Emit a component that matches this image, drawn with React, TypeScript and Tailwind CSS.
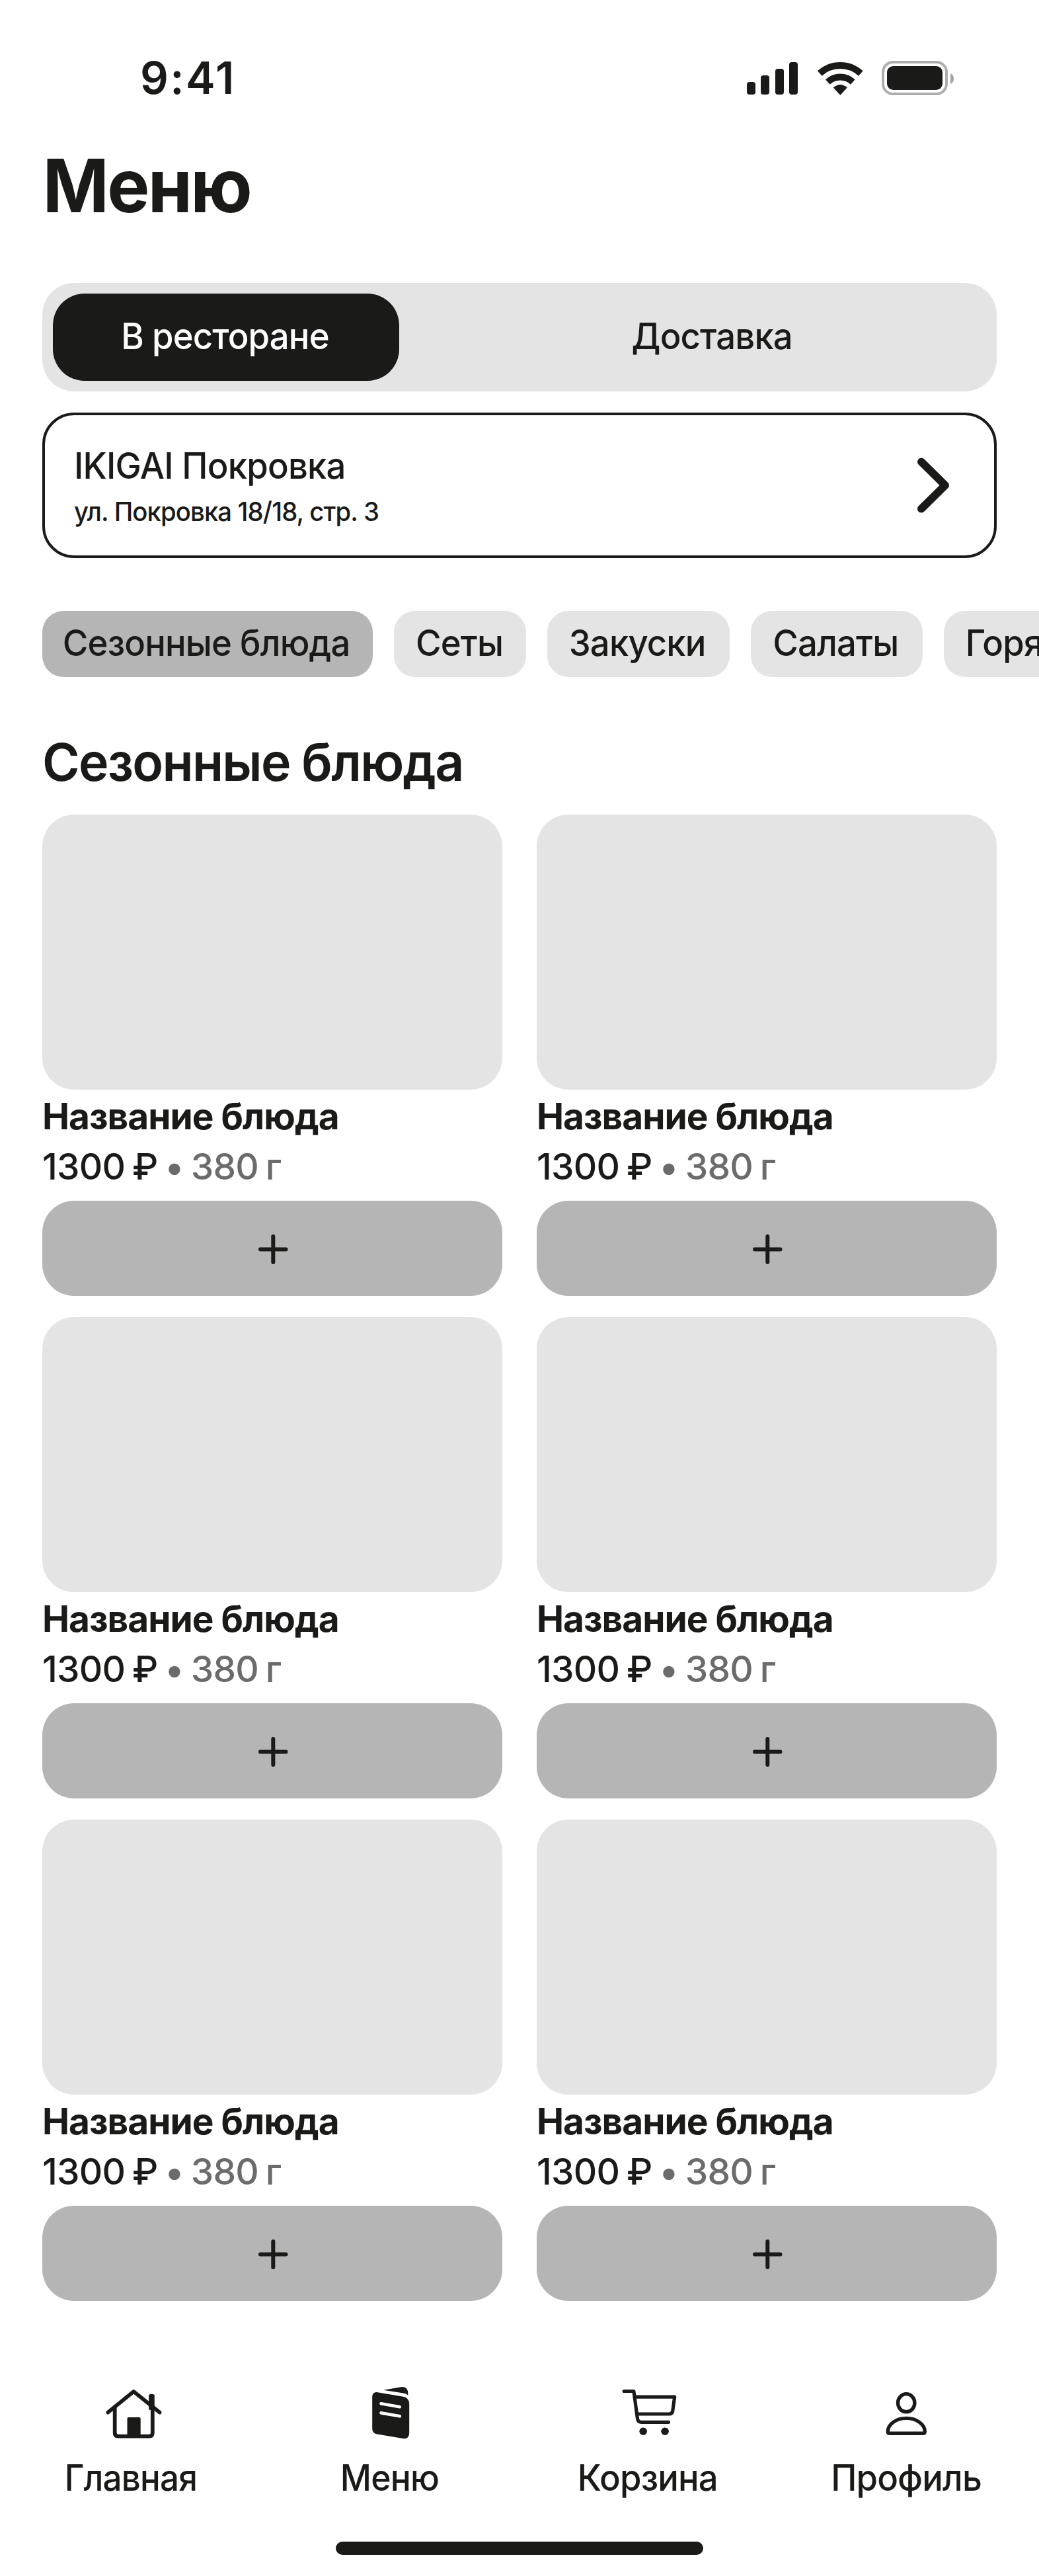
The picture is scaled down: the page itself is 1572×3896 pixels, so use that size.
import type { ReactNode } from 'react';

const INK = '#1a1a18';

const chips = [
  { label: 'Сезонные блюда', box: 'w-[500px] bg-[#b5b5b5]' },
  { label: 'Сеты', box: 'w-[200px] bg-[#e4e4e4]' },
  { label: 'Закуски', box: 'w-[276px] bg-[#e4e4e4]' },
  { label: 'Салаты', box: 'w-[260px] bg-[#e4e4e4]' },
  { label: 'Горячее', box: 'w-[276px] bg-[#e4e4e4]' },
];

/* Body label in the slightly condensed width used across the app. */
function Label({ children }: { children: ReactNode }) {
  return (
    <span className="inline-block scale-x-[0.957] whitespace-nowrap pr-[3px] text-[55px] font-medium leading-[72px] tracking-[-0.9px]">
      {children}
    </span>
  );
}

function StatusBar() {
  return (
    <div className="flex h-[236px] items-start justify-between pl-[212px] pr-[129px]">
      <span className="mt-[76px] text-[67px] font-semibold leading-[84px] tracking-[2.4px]">9:41</span>
      <svg className="mt-[88px]" width="320" height="60" viewBox="0 0 320 60" fill={INK}>
        <rect x="7" y="36" width="13" height="19" rx="4" />
        <rect x="28" y="26" width="13" height="29" rx="4" />
        <rect x="50" y="16" width="13" height="39" rx="4" />
        <rect x="71" y="6" width="13" height="49" rx="4" />
        <g transform="translate(148.3 56)" fill="none" stroke={INK} strokeWidth="10">
          <path d="M-31 -33A46 46 0 0 1 31 -33" />
          <path d="M-19 -20A28 28 0 0 1 19 -20" />
          <path d="M0 0L-10.5 -11.5Q0 -20.5 10.5 -11.5Z" fill={INK} stroke="none" />
        </g>
        <rect x="213" y="6" width="96" height="48" rx="15" fill="none" stroke="#adadad" strokeWidth="4" />
        <rect x="219" y="12" width="84" height="36" rx="9.5" />
        <path d="M315 23Q320 25 320 31T315 39Z" fill="#a3a3a3" />
      </svg>
    </div>
  );
}

function Dish() {
  return (
    <article className="flex h-[728px] w-[696px] flex-col">
      <div className="h-[416px] rounded-[48px] bg-[#e4e4e4]" />
      <h3 className="mt-1 h-[76px] whitespace-nowrap text-[55px] font-bold leading-[72px] tracking-[-1px]">Название блюда</h3>
      <p className="h-[72px] whitespace-nowrap text-[55px] font-medium leading-[72px] tracking-[-0.8px] [word-spacing:-3px]">
        1300 ₽ <span className="text-[#6b6b6b]">• 380 г</span>
      </p>
      <button className="mt-auto flex h-[144px] items-center justify-center rounded-[48px] bg-[#b5b5b5]">
        <svg width="48" height="48" viewBox="0 0 48 48" stroke={INK} strokeWidth="6" strokeLinecap="round">
          <path d="M6 25.500H44.500M25.300 6V45" />
        </svg>
      </button>
    </article>
  );
}

const tabs = [
  {
    label: 'Главная',
    fit: 'scale-x-[0.93]',
    icon: (
      <g transform="translate(0.5 0)" strokeWidth="5.8">
        <path d="M12.900 48.600L51.700 17L91 48.600" />
        <path d="M23.200 41V79.500Q23.200 84.600 28.300 84.600H75.300Q80.300 84.600 80.300 79.500V41" />
        <rect x="74.600" y="21" width="8.700" height="24" rx="2.500" fill={INK} stroke="none" />
        <rect x="42" y="56" width="20.200" height="29" rx="2" fill={INK} stroke="none" />
      </g>
    ),
  },
  {
    label: 'Меню',
    fit: 'scale-x-[0.94]',
    icon: (
      <g transform="translate(-0.500 0)" strokeWidth="4.700">
        <path
          d="M31 18.200L69.500 24.800Q78.700 26.500 78.700 36V79.500Q78.700 89.500 69 88.100L29 81.200Q22.700 79.800 22.700 73V25Q23 17 31 18.200Z"
          fill={INK}
          stroke="none"
        />
        <path d="M39.500 14.700L66 10.200Q76.800 9 76.800 20V22.500Q74 20.300 70 19.600Z" fill={INK} stroke="none" />
        <path d="M36 35.300L64.300 40.200M36 49.400L64.300 54.300" stroke="white" />
      </g>
    ),
  },
  {
    label: 'Корзина',
    fit: 'scale-x-[0.957]',
    icon: (
      <g transform="translate(-1.500 0)" strokeWidth="5.200">
        <path d="M13.700 16.500H28.400L33.900 57.500Q34.500 63.300 39.500 63.300H81" />
        <path d="M30 25.100H90.200L87.200 46.500Q86.400 51 81.800 51H34" />
        <circle cx="42.700" cy="77.200" r="5.800" fill={INK} stroke="none" />
        <circle cx="75.600" cy="77.200" r="5.800" fill={INK} stroke="none" />
      </g>
    ),
  },
  {
    label: 'Профиль',
    fit: 'scale-x-[0.957]',
    icon: (
      <g strokeWidth="5.400">
        <ellipse cx="48.200" cy="34.200" rx="12.700" ry="13.600" />
        <path d="M20.300 77.500C20.300 66.500 33 57.400 48.300 57.400S76.300 66.500 76.300 77.500Q76.300 80.300 73.300 80.300H23.300Q20.300 80.300 20.300 77.500Z" />
      </g>
    ),
  },
];

export default function App() {
  return (
    <main className="flex h-[3896px] w-[1572px] flex-col overflow-hidden bg-white font-['Inter',sans-serif] text-[#1a1a18]">
      <StatusBar />
      <h1 className="-mt-[16px] h-[208px] origin-left scale-x-[0.963] pl-[67px] text-[112px] font-bold leading-[120px] tracking-[-2.8px]">Меню</h1>
      <div className="mx-16 flex h-[164px] shrink-0 items-center rounded-[48px] bg-[#e4e4e4] px-4">
        <div className="flex h-[132px] w-[524px] items-center justify-center rounded-[48px] bg-[#1a1a18] pb-1 text-white">
          <Label>В ресторане</Label>
        </div>
        <div className="ml-[62px] flex flex-1 justify-center pb-1">
          <Label>Доставка</Label>
        </div>
      </div>
      <div className="mx-16 mt-8 flex h-[220px] shrink-0 items-center justify-between rounded-[48px] border-4 border-[#1a1a18] pl-[44px] pr-[62px]">
        <div className="pt-1">
          <p className="origin-left scale-x-[0.957] whitespace-nowrap text-[55px] font-medium leading-[76px] tracking-[-0.8px]">IKIGAI Покровка</p>
          <p className="origin-left scale-x-[0.957] whitespace-nowrap text-[40px] font-medium leading-[64px] tracking-[-0.9px]">
            ул. Покровка 18/18, стр. 3
          </p>
        </div>
        <svg width="60" height="90" viewBox="0 0 60 90" fill="none" stroke={INK} strokeWidth="12" strokeLinecap="round" strokeLinejoin="round">
          <path d="M12 9.500L48 45L12 80.500" />
        </svg>
      </div>
      <div className="ml-16 mt-20 flex shrink-0 gap-8 overflow-hidden">
        {chips.map((c) => (
          <div key={c.label} className={`flex h-[100px] shrink-0 items-center justify-center rounded-[32px] pb-1 ${c.box}`}>
            <Label>{c.label}</Label>
          </div>
        ))}
      </div>
      <h2 className="ml-16 mt-[80px] h-[128px] shrink-0 origin-left scale-x-[0.975] text-[79px] font-semibold leading-[96px] tracking-[-1.8px]">
        Сезонные блюда
      </h2>
      <section className="mx-16 grid shrink-0 grid-cols-2 gap-x-[52px] gap-y-8">
        {[0, 1, 2, 3, 4, 5].map((i) => (
          <Dish key={i} />
        ))}
      </section>
      <nav className="flex shrink-0 pl-1 pt-[120px]">
        {tabs.map((t) => (
          <div key={t.label} className="flex w-[391px] shrink-0 flex-col items-center">
            <svg width="100" height="100" viewBox="0 0 100 100" fill="none" stroke={INK} strokeLinecap="round" strokeLinejoin="round">
              {t.icon}
            </svg>
            <span className={`mt-[11px] whitespace-nowrap pr-[3px] text-[55px] font-medium leading-[72px] tracking-[-0.9px] ${t.fit}`}>{t.label}</span>
          </div>
        ))}
      </nav>
      <div className="mx-auto mt-[61px] h-5 w-[556px] shrink-0 rounded-full bg-[#1a1a18]" />
    </main>
  );
}
